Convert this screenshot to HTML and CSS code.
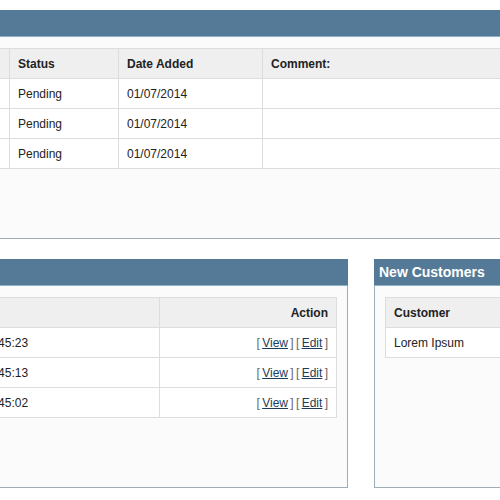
FILE: index.html
```html
<!DOCTYPE html>
<html>
<head>
<meta charset="utf-8">
<link rel="stylesheet" href="styles.css">
</head>
<body>
<div class="page">
  <section class="panel panel-history">
    <div class="heading"></div>
    <div class="content">
      <table class="list">
        <colgroup><col class="c-first"><col class="c-status"><col class="c-date"><col></colgroup>
        <thead>
          <tr><td></td><td>Status</td><td>Date Added</td><td>Comment:</td></tr>
        </thead>
        <tbody>
          <tr><td></td><td>Pending</td><td>01/07/2014</td><td></td></tr>
          <tr><td></td><td>Pending</td><td>01/07/2014</td><td></td></tr>
          <tr><td></td><td>Pending</td><td>01/07/2014</td><td></td></tr>
        </tbody>
      </table>
    </div>
  </section>

  <div class="row">
    <section class="panel panel-orders">
      <div class="heading"></div>
      <div class="content">
        <table class="list">
          <colgroup><col><col class="c-action"></colgroup>
          <thead>
            <tr><td></td><td class="right">Action</td></tr>
          </thead>
          <tbody>
            <tr><td>01/07/2014 12:45:23</td><td class="right actions">[ <a href="#">View</a> ] [ <a href="#">Edit</a> ]</td></tr>
            <tr><td>01/07/2014 12:45:13</td><td class="right actions">[ <a href="#">View</a> ] [ <a href="#">Edit</a> ]</td></tr>
            <tr><td>01/07/2014 12:45:02</td><td class="right actions">[ <a href="#">View</a> ] [ <a href="#">Edit</a> ]</td></tr>
          </tbody>
        </table>
      </div>
    </section>

    <section class="panel panel-customers">
      <div class="heading"><h2>New Customers</h2></div>
      <div class="content">
        <table class="list">
          <thead>
            <tr><td>Customer</td></tr>
          </thead>
          <tbody>
            <tr><td>Lorem Ipsum</td></tr>
          </tbody>
        </table>
      </div>
    </section>
  </div>
</div>
</body>
</html>
```

FILE: styles.css
```css
html, body {
  margin: 0;
  padding: 0;
  background: #ffffff;
  overflow: hidden;
}

body {
  font-family: "Liberation Sans", Arial, sans-serif;
  font-size: 12px;
  color: #222222;
}

.page {
  padding-top: 10px;
}

.panel {
  border: 1px solid #9eadb6;
  border-top: none;
  background: #fbfbfb;
  box-sizing: border-box;
}

.heading {
  height: 26px;
  background: #557a97;
  border-bottom: 1px solid #8db0c5;
  margin: 0 -1px;
  display: flex;
  align-items: center;
}

.heading h2 {
  margin: 0;
  padding-left: 5px;
  font-size: 14px;
  font-weight: bold;
  color: #ffffff;
  white-space: nowrap;
}

.content {
  padding: 11px 10px 69px 10px;
}

.panel-history {
  margin-left: -20px;
  width: 620px;
}

.list {
  border-collapse: collapse;
  width: 100%;
  background: #ffffff;
}

.list td {
  border: 1px solid #dddddd;
  height: 29px;
  padding: 0 8px;
  line-height: 14px;
  white-space: nowrap;
  vertical-align: middle;
}

.list thead td {
  background: #efefef;
  font-weight: bold;
  color: #222222;
}

.list .right {
  text-align: right;
}

.c-first { width: 18px; }
.c-status { width: 109px; }
.c-date { width: 144px; }
.c-action { width: 177px; }

.list a {
  color: #1d3c5a;
  text-decoration: underline;
}

.list td.actions {
  color: #666666;
  word-spacing: -1px;
}

.row {
  display: flex;
  margin-top: 20px;
  align-items: stretch;
}

.panel-orders {
  flex: none;
  width: 450px;
  margin-left: -102px;
}

.panel-customers {
  flex: none;
  width: 220px;
  margin-left: 26px;
}
```
